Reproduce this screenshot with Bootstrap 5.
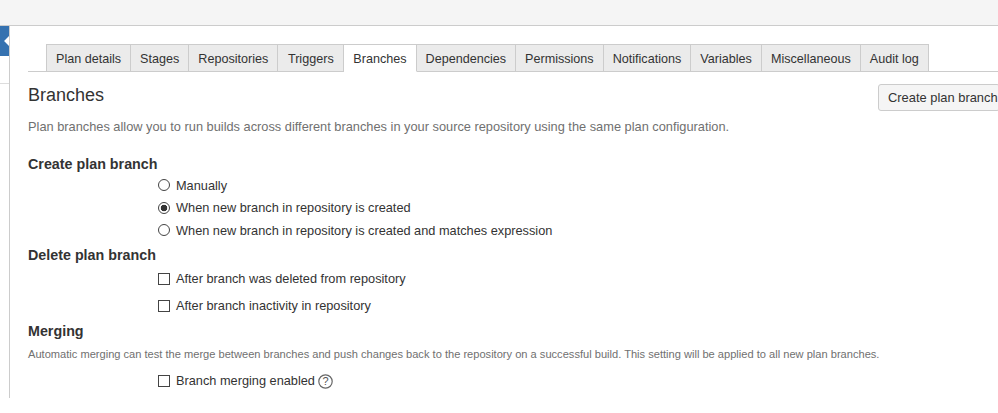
<!DOCTYPE html>
<html lang="en">
<head>
    <meta charset="UTF-8">
    <title>Branches</title>
    <link href="https://cdn.jsdelivr.net/npm/bootstrap@5.3.3/dist/css/bootstrap.min.css" rel="stylesheet">
    <style>
        html, body { height: 413px; overflow: hidden; }
        body { font-family: "Liberation Sans", Arial, sans-serif; font-size: 12.75px; color: #333; background: #fff; }
        .top-strip { height: 26px; background: #f5f5f5; border-bottom: 1px solid #ccc; }
        .page-wrap { height: 372px; }
        .side-rail { width: 10px; flex: none; border-right: 1px solid #ccc; }
        .side-head { height: 58px; border-bottom: 1px solid #ddd; }
        .side-toggle { width: 9px; height: 30px; background: #3572b0; clip-path: polygon(0 0, 100% 0, 100% 33%, 45% 50%, 100% 67%, 100% 100%, 0 100%); }
        .main-area { padding: 18px 0 0 18px; min-width: 0; }
        .plan-tabs { border-bottom: 1px solid #ccc; padding-left: 18px; height: 28px; flex-wrap: nowrap; }
        .plan-tabs .nav-link { height: 28px; padding: 0 9px; line-height: 28px; font-size: 12.6px; text-align: center; color: #333; background: #ebebeb; border: 1px solid #ccc; border-left-width: 0; border-radius: 0; white-space: nowrap; margin: 0; }
        .plan-tabs .nav-item:first-child .nav-link { border-left-width: 1px; min-width: 85px; }
        .plan-tabs .nav-link.active { background: #fff; color: #333; border-bottom-color: #fff; }
        .plan-tabs .tab-triggers { min-width: 66px; }
        .plan-tabs .tab-misc { min-width: 99px; }
        .head-row { margin-top: 12px; height: 26px; }
        .page-title { font-size: 18px; font-weight: 400; line-height: 22px; margin: 0; color: #333; }
        .create-btn { width: 122px; height: 27px; flex: none; padding: 0 0 0 9px; margin-right: -2px; font-size: 12.9px; text-align: left; color: #333; background: #f5f5f5; border: 1px solid #ccc; border-radius: 3px; white-space: nowrap; }
        .intro-text { margin: 9px 0 0; font-size: 12.8px; line-height: 16px; color: #707070; }
        .group-title { font-size: 14.3px; font-weight: 700; line-height: 18px; margin: 0; color: #333; }
        .group-one { margin-top: 20px; }
        .group-two { margin-top: 4px; }
        .group-three { margin-top: 2px; }
        .opt-list { padding-left: 130px; }
        .opt-list.after-create { padding-top: 1px; }
        .opt-row { display: flex; align-items: center; height: 22.5px; margin: 0; }
        .opt-row.tall { height: 27px; }
        .opt-list.after-delete { padding-top: 2px; }
        .opt-list.after-merge { padding-top: 7px; }
        .opt-row .form-check-input { width: 12px; height: 12px; margin: 0 6px 0 0; flex: none; border: 1px solid #444; background-color: #fff; float: none; }
        .opt-row .form-check-input[type=checkbox] { border-radius: 0; }
        .opt-row .form-check-input:checked[type=radio] { background-color: #fff; border-color: #444; background-image: radial-gradient(circle, #333 0, #333 3px, transparent 3.6px); }
        .merge-note { margin: 7px 0 0; font-size: 11.1px; line-height: 14px; color: #707070; white-space: nowrap; }
        .help-icon { margin-left: 3px; flex: none; }
    </style>
</head>
<body>
    <div class="top-strip"></div>
    <div class="page-wrap d-flex">
        <div class="side-rail">
            <div class="side-head"><div class="side-toggle"></div></div>
        </div>
        <div class="main-area flex-grow-1">
            <ul class="nav plan-tabs">
                <li class="nav-item"><a class="nav-link" href="#">Plan details</a></li>
                <li class="nav-item"><a class="nav-link" href="#">Stages</a></li>
                <li class="nav-item"><a class="nav-link" href="#">Repositories</a></li>
                <li class="nav-item"><a class="nav-link tab-triggers" href="#">Triggers</a></li>
                <li class="nav-item"><a class="nav-link active" href="#">Branches</a></li>
                <li class="nav-item"><a class="nav-link" href="#">Dependencies</a></li>
                <li class="nav-item"><a class="nav-link" href="#">Permissions</a></li>
                <li class="nav-item"><a class="nav-link" href="#">Notifications</a></li>
                <li class="nav-item"><a class="nav-link" href="#">Variables</a></li>
                <li class="nav-item"><a class="nav-link tab-misc" href="#">Miscellaneous</a></li>
                <li class="nav-item"><a class="nav-link" href="#">Audit log</a></li>
            </ul>
            <div class="head-row d-flex justify-content-between align-items-start">
                <h2 class="page-title">Branches</h2>
                <button type="button" class="create-btn">Create plan branch</button>
            </div>
            <p class="intro-text">Plan branches allow you to run builds across different branches in your source repository using the same plan configuration.</p>

            <h3 class="group-title group-one">Create plan branch</h3>
            <div class="opt-list after-create">
                <label class="opt-row"><input class="form-check-input" type="radio" name="createMode">Manually</label>
                <label class="opt-row"><input class="form-check-input" type="radio" name="createMode" checked>When new branch in repository is created</label>
                <label class="opt-row"><input class="form-check-input" type="radio" name="createMode">When new branch in repository is created and matches expression</label>
            </div>

            <h3 class="group-title group-two">Delete plan branch</h3>
            <div class="opt-list after-delete">
                <label class="opt-row tall"><input class="form-check-input" type="checkbox">After branch was deleted from repository</label>
                <label class="opt-row tall"><input class="form-check-input" type="checkbox">After branch inactivity in repository</label>
            </div>

            <h3 class="group-title group-three">Merging</h3>
            <p class="merge-note">Automatic merging can test the merge between branches and push changes back to the repository on a successful build. This setting will be applied to all new plan branches.</p>
            <div class="opt-list after-merge">
                <label class="opt-row tall"><input class="form-check-input" type="checkbox">Branch merging enabled
                    <svg class="help-icon" width="15" height="15" viewBox="0 0 15 15" fill="none"><circle cx="7.5" cy="7.5" r="6.7" stroke="#666" stroke-width="1.2"/><text x="7.5" y="11.3" text-anchor="middle" font-size="11" font-family="Liberation Sans" fill="#555">?</text></svg>
                </label>
            </div>
        </div>
    </div>
</body>
</html>
